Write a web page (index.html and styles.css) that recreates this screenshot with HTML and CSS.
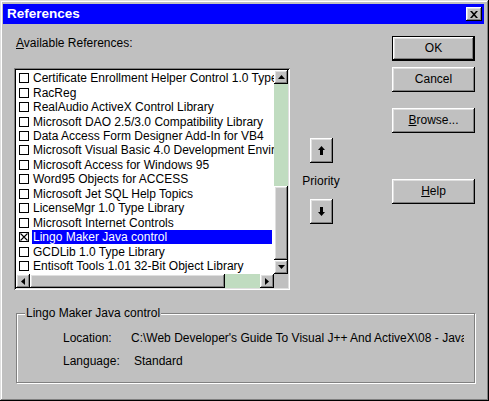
FILE: index.html
```html
<!DOCTYPE html>
<html>
<head>
<meta charset="utf-8">
<title>References</title>
<link rel="stylesheet" href="styles.css">
</head>
<body>
<div class="window">
  <div class="titlebar">
    <span class="title">References</span>
    <span class="close raised"><svg width="8" height="7" viewBox="0 0 8 7"><path d="M0 0h2l2 2.3L6 0h2L5 3.5 8 7H6L4 4.7 2 7H0l3-3.5z" fill="#000"/></svg></span>
  </div>
  <div class="main">
    <div class="leftcol">
      <div class="label"><u>A</u>vailable References:</div>
      <div class="listbox">
        <div class="rows">
          <div class="row"><span class="cb"></span><span class="txt">Certificate Enrollment Helper Control 1.0 Type Library</span></div>
          <div class="row"><span class="cb"></span><span class="txt">RacReg</span></div>
          <div class="row"><span class="cb"></span><span class="txt">RealAudio ActiveX Control Library</span></div>
          <div class="row"><span class="cb"></span><span class="txt">Microsoft DAO 2.5/3.0 Compatibility Library</span></div>
          <div class="row"><span class="cb"></span><span class="txt">Data Access Form Designer Add-In for VB4</span></div>
          <div class="row"><span class="cb"></span><span class="txt">Microsoft Visual Basic 4.0 Development Environment</span></div>
          <div class="row"><span class="cb"></span><span class="txt">Microsoft Access for Windows 95</span></div>
          <div class="row"><span class="cb"></span><span class="txt">Word95 Objects for ACCESS</span></div>
          <div class="row"><span class="cb"></span><span class="txt">Microsoft Jet SQL Help Topics</span></div>
          <div class="row"><span class="cb"></span><span class="txt">LicenseMgr 1.0 Type Library</span></div>
          <div class="row"><span class="cb"></span><span class="txt">Microsoft Internet Controls</span></div>
          <div class="row"><span class="cb checked"><svg width="8" height="8" viewBox="0 0 8 8"><path d="M0.5 0.5L7.5 7.5M7.5 0.5L0.5 7.5" stroke="#000" stroke-width="1.1"/></svg></span><span class="txt selected">Lingo Maker Java control</span></div>
          <div class="row"><span class="cb"></span><span class="txt">GCDLib 1.0 Type Library</span></div>
          <div class="row"><span class="cb"></span><span class="txt">Entisoft Tools 1.01 32-Bit Object Library</span></div>
        </div>
        <div class="vscroll">
          <div class="sbtn raised"><svg width="7" height="4" viewBox="0 0 7 4"><path d="M3.5 0L7 4H0z" fill="#000"/></svg></div>
          <div class="track"></div>
          <div class="vthumb raised"></div>
          <div class="sbtn raised"><svg width="7" height="4" viewBox="0 0 7 4"><path d="M0 0H7L3.5 4z" fill="#000"/></svg></div>
        </div>
        <div class="hscroll">
          <div class="sbtn raised"><svg width="4" height="7" viewBox="0 0 4 7"><path d="M0 3.5L4 0V7z" fill="#000"/></svg></div>
          <div class="hthumb raised"></div>
          <div class="track"></div>
          <div class="sbtn raised"><svg width="4" height="7" viewBox="0 0 4 7"><path d="M0 0L4 3.5 0 7z" fill="#000"/></svg></div>
        </div>
        <div class="corner"></div>
      </div>
    </div>
    <div class="prio">
      <div class="pbtn raised up"><svg width="7" height="9" viewBox="0 0 7 9"><path d="M3.5 0L7 4H5V9H2V4H0z" fill="#000"/></svg></div>
      <div class="plabel">Priority</div>
      <div class="pbtn raised down"><svg width="7" height="9" viewBox="0 0 7 9"><path d="M2 0H5V5H7L3.5 9 0 5H2z" fill="#000"/></svg></div>
    </div>
    <div class="buttons">
      <div class="btn default">OK</div>
      <div class="btn raised cancel">Cancel</div>
      <div class="btn raised browse"><u>B</u>rowse...</div>
      <div class="btn raised help"><u>H</u>elp</div>
    </div>
  </div>
  <div class="group">
    <div class="gtitle">Lingo Maker Java control</div>
    <div class="grow loc"><span class="glabel">Location:</span><span class="gval">C:\Web Developer's Guide To Visual J++ And ActiveX\08 - Java Controls\Lingo</span></div>
    <div class="grow lang"><span class="glabel">Language:</span><span class="gval">Standard</span></div>
  </div>
</div>
</body>
</html>
```

FILE: styles.css
```css
* { box-sizing: border-box; }
html, body { margin: 0; padding: 0; }
body {
  width: 489px;
  height: 401px;
  overflow: hidden;
  background: #c0c0c0;
  font-family: "Liberation Sans", Arial, sans-serif;
  font-size: 12px;
  color: #000;
}
.window {
  width: 489px;
  height: 401px;
  background: #c0c0c0;
  box-shadow: inset -1px -1px #000, inset 1px 1px #dfdfdf, inset -2px -2px #808080, inset 2px 2px #fff;
  padding-top: 4px;
  display: flex;
  flex-direction: column;
}
.raised {
  background: #c0c0c0;
  box-shadow: inset -1px -1px #000, inset 1px 1px #fff, inset -2px -2px #808080, inset 2px 2px #dfdfdf;
}
.titlebar {
  height: 20px;
  margin: 0 5px 0 3px;
  background: #0000ff;
  display: flex;
  align-items: center;
  justify-content: space-between;
  padding-left: 4px;
}
.title {
  color: #fff;
  font-weight: bold;
  font-size: 13.5px;
  line-height: 16px;
}
.close {
  width: 16px;
  height: 14px;
  margin-right: 2px;
  display: flex;
  align-items: center;
  justify-content: center;
}
.main {
  display: flex;
  align-items: flex-start;
  padding-top: 12px;
  height: 266px;
  flex: none;
}
.leftcol {
  margin-left: 14px;
  width: 276px;
}
.label {
  line-height: 15px;
  height: 15px;
  padding-left: 2px;
}
.listbox {
  margin-top: 17px;
  width: 276px;
  height: 222px;
  padding: 2px;
  background: #fff;
  box-shadow: inset 1px 1px #808080, inset -1px -1px #fff, inset 2px 2px #000, inset -2px -2px #dfdfdf;
  display: grid;
  grid-template-columns: 258px 14px;
  grid-template-rows: 204px 14px;
}
.rows {
  overflow: hidden;
  background: #fff;
  padding-top: 1px;
}
.row {
  height: 14.46px;
  display: flex;
  align-items: center;
  white-space: nowrap;
}
.cb {
  flex: none;
  width: 10px;
  height: 10px;
  margin-left: 3px;
  border: 1px solid #000;
  background: #fff;
  display: flex;
  align-items: center;
  justify-content: center;
}
.cb.checked { background: #fff; }
.txt {
  flex: none;
  margin-left: 3px;
  padding: 0 1px;
  line-height: 14px;
  height: 14px;
}
.txt.selected {
  flex: 1;
  margin-right: 2px;
  background: #0000ff;
  color: #fff;
}
.vscroll {
  display: flex;
  flex-direction: column;
  background: #c0dcc0;
}
.hscroll {
  display: flex;
  background: #c0dcc0;
}
.sbtn {
  flex: none;
  width: 14px;
  height: 14px;
  display: flex;
  align-items: center;
  justify-content: center;
}
.track {
  flex: 1;
  background: #c0dcc0;
}
.vthumb {
  flex: none;
  width: 14px;
  height: 74px;
}
.hthumb {
  flex: none;
  width: 195px;
  height: 14px;
}
.corner { background: #c0c0c0; }
.prio {
  margin-left: 9px;
  width: 44px;
  display: flex;
  flex-direction: column;
  align-items: center;
}
.pbtn {
  width: 23px;
  height: 25px;
  display: flex;
  align-items: center;
  justify-content: center;
}
.pbtn.up { margin-top: 102px; }
.plabel {
  margin-top: 11px;
  line-height: 15px;
  white-space: nowrap;
}
.pbtn.down { margin-top: 10px; }
.buttons {
  margin-left: 49px;
  width: 83px;
  display: flex;
  flex-direction: column;
}
.btn {
  height: 25px;
  display: flex;
  align-items: center;
  justify-content: center;
  line-height: 15px;
}
.btn.default {
  border: 1px solid #000;
  background: #c0c0c0;
  box-shadow: inset -1px -1px #000, inset 1px 1px #fff, inset -2px -2px #808080, inset 2px 2px #dfdfdf;
}
.btn.cancel { margin-top: 6px; }
.btn.browse { margin-top: 16px; }
.btn.help { margin-top: 46px; }
.group {
  margin: 23px 0 0 16px;
  width: 459px;
  height: 70px;
  flex: none;
  border: 1px solid #808080;
  box-shadow: 1px 1px 0 #fff, inset 1px 1px 0 #fff;
}
.gtitle {
  display: block;
  width: max-content;
  margin: -8px 0 0 8px;
  padding: 0 1px;
  line-height: 15px;
  background: #c0c0c0;
}
.grow {
  display: flex;
  padding-left: 46px;
  line-height: 15px;
  white-space: nowrap;
}
.grow.loc { margin-top: 10px; }
.grow.lang { margin-top: 8px; }
.glabel { flex: none; }
.loc .glabel { width: 68px; }
.lang .glabel { width: 71px; }
.gval { overflow: hidden; }
.loc .gval { width: 333px; }
```
